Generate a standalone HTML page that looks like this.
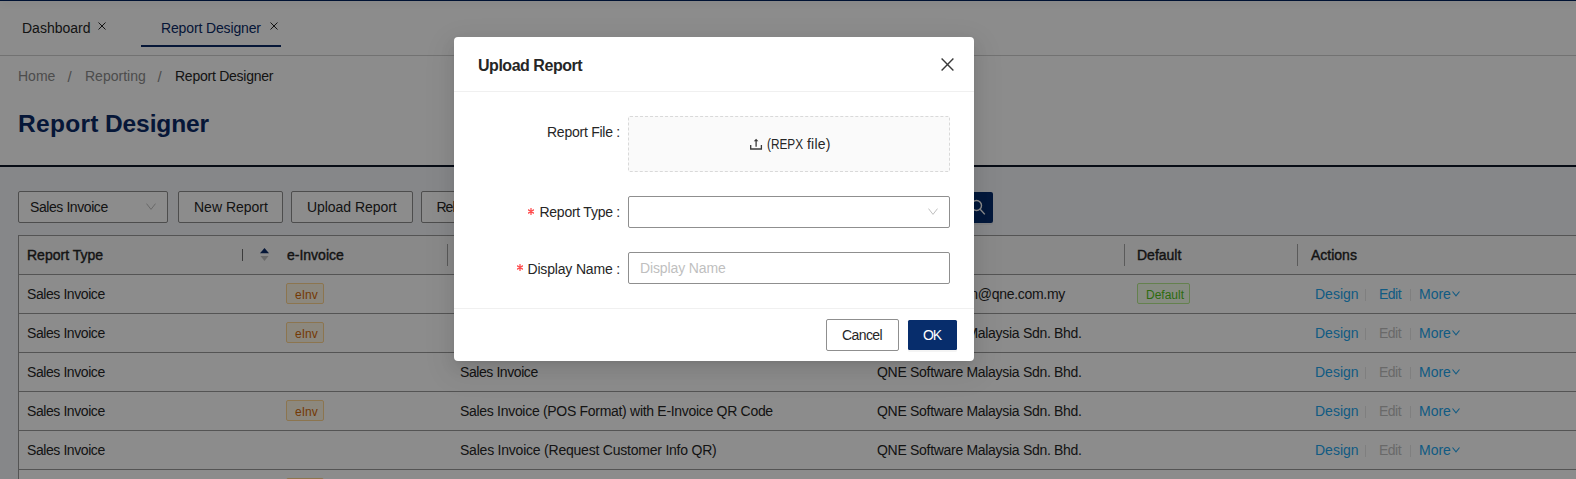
<!DOCTYPE html>
<html><head><meta charset="utf-8">
<style>
*{box-sizing:border-box;margin:0;padding:0}
html,body{width:1576px;height:479px;overflow:hidden;background:#fff;font-family:"Liberation Sans",sans-serif;font-size:14px;line-height:16px;color:#262626}
.a{position:absolute;white-space:nowrap}
#top{position:absolute;left:0;top:0;width:1576px;height:1px;background:#00215d;box-shadow:0 2px 6px rgba(0,0,0,.2)}
#tabline{position:absolute;left:0;top:55px;width:1576px;height:1px;background:#d0d0d0}
#uline{position:absolute;left:141px;top:45px;width:140px;height:2px;background:#0b2a66}
#darkline{position:absolute;left:0;top:165px;width:1576px;height:2px;background:#0e1727}
#content{position:absolute;left:0;top:167px;width:1576px;height:312px;background:#f4f6fa}
.btn{position:absolute;top:191px;height:32px;border:1px solid #8c8c8c;border-radius:2px;background:#fff}
.tbl{position:absolute;left:18px;top:235px;width:1600px;height:260px;border-top:1px solid #999;border-left:1px solid #999;background:#fff}
.hrow{position:absolute;left:0;top:0;width:100%;height:39px;background:#fafafa;border-bottom:1px solid #999}
.row{position:absolute;left:0;width:100%;height:39px;border-bottom:1px solid #999}
.sep{position:absolute;top:8px;width:1px;height:22px;background:#a5a5a5}
.th{position:absolute;top:11px;color:#262626;-webkit-text-stroke:0.4px #262626;letter-spacing:0}
.td{position:absolute;top:11px;color:#262626;letter-spacing:-0.3px}
.tag{position:absolute;top:8px;height:21px;border:1px solid #ffd591;background:#fff7e6;color:#d46b08;border-radius:2px;font-size:12px;line-height:19px;padding:2px 5px 0 8px}
.gtag{position:absolute;top:8px;height:21px;border:1px solid #b7eb8f;background:#f6ffed;color:#52c41a;border-radius:2px;font-size:12px;line-height:19px;padding:2px 5px 0 8px}
.link{color:#22a6ee}
.td.link,.td.dis{top:10.7px}
.dis{color:#bfbfbf}
.vs{position:absolute;top:14px;width:1px;height:12px;background:#e8e8e8}
#mask{position:absolute;left:0;top:0;width:1576px;height:479px;background:rgba(0,0,0,.45)}
#modal{position:absolute;left:454px;top:37px;width:520px;height:324px;background:#fff;border-radius:4px;box-shadow:0 3px 6px -4px rgba(0,0,0,.12),0 6px 16px 0 rgba(0,0,0,.08),0 9px 28px 8px rgba(0,0,0,.05)}
.lbl{position:absolute;color:#262626;text-align:right}
.req{color:#ff4d4f;font-family:"Liberation Mono",monospace;font-size:14px}
.inp{position:absolute;left:174px;width:322px;height:32px;border:1px solid #8f8f8f;border-radius:2px;background:#fff}
</style></head><body>
<div id="top"></div>
<div class="a" id="t_dash" style="left:22px;top:20px">Dashboard</div>
<svg class="a" style="left:98px;top:22px" width="8" height="8" viewBox="0 0 8 8"><path d="M0.5 0.5L7.5 7.5M7.5 0.5L0.5 7.5" stroke="#262626" stroke-width="1"/></svg>
<div class="a" id="t_rd" style="left:161px;top:20px;letter-spacing:-0.14px;color:#0b2a66">Report Designer</div>
<svg class="a" style="left:270px;top:22px" width="8" height="8" viewBox="0 0 8 8"><path d="M0.5 0.5L7.5 7.5M7.5 0.5L0.5 7.5" stroke="#262626" stroke-width="1"/></svg>
<div id="uline"></div>
<div id="tabline"></div>

<div class="a" id="bc1" style="left:18px;top:68px;color:#8c8c8c">Home</div>
<div class="a" style="left:67.5px;top:68.5px;color:#8c8c8c;font-size:15px">/</div>
<div class="a" id="bc2" style="left:85px;top:68px;color:#8c8c8c">Reporting</div>
<div class="a" style="left:157.5px;top:68.5px;color:#8c8c8c;font-size:15px">/</div>
<div class="a" id="bc3" style="left:175px;top:68px;letter-spacing:-0.25px;color:#262626">Report Designer</div>

<div class="a" id="title" style="left:18px;top:110px;font-size:24.5px;line-height:28px;font-weight:700;color:#0b2a66;letter-spacing:0.3px">Report</div><div class="a" id="title2" style="left:105px;top:110px;font-size:24.5px;line-height:28px;font-weight:700;color:#0b2a66;letter-spacing:-0.1px">Designer</div>

<div id="darkline"></div>
<div id="content"></div>

<!-- toolbar -->
<div class="btn" style="left:18px;width:150px"></div>
<div class="a" id="sel" style="left:30px;top:199px;letter-spacing:-0.42px">Sales Invoice</div>
<svg class="a" style="left:146px;top:203px" width="10" height="8" viewBox="0 0 10 8"><path d="M0.5 0.6L5 6.4L9.5 0.6" fill="none" stroke="#bfbfbf" stroke-width="1"/></svg>
<div class="btn" style="left:178px;width:105px"></div>
<div class="a" id="b1" style="left:194px;top:199px">New Report</div>
<div class="btn" style="left:291px;width:122px"></div>
<div class="a" id="b2" style="left:307px;top:199px;letter-spacing:-0.05px">Upload Report</div>
<div class="btn" style="left:421px;width:130px"></div>
<div class="a" style="left:436.5px;top:199px;letter-spacing:-1px">Release</div>
<div class="a" style="left:700px;top:191px;width:262px;height:32px;border:1px solid #8c8c8c;background:#fff"></div><div class="a" style="left:961px;top:192px;width:32px;height:31px;background:#072d6c;border-radius:0 2px 2px 0;box-shadow:0 2px 0 rgba(0,0,0,.045)"></div><svg class="a" style="left:968px;top:197px" width="20" height="20" viewBox="0 0 20 20"><circle cx="8.5" cy="8.5" r="5" fill="none" stroke="#fff" stroke-width="1.4"/><path d="M12.2 12.3L16.8 17.4" stroke="#fff" stroke-width="1.4"/></svg>

<!-- table -->
<div class="tbl">
  <div class="hrow">
    <div class="th" id="h1" style="left:8px">Report Type</div>
    <div class="sep" style="left:223px;top:13px;height:12px;background:#6e6e6e"></div>
    <svg class="a" style="left:241px;top:12px" width="9" height="14" viewBox="0 0 9 14"><path d="M0 5.3L4.5 0L9 5.3Z" fill="#0b2a66"/><path d="M0.5 8L4.5 13L8.5 8Z" fill="#bfbfbf"/></svg>
    <div class="th" id="h2" style="left:268px">e-Invoice</div>
    <div class="sep" style="left:428px"></div>
    <div class="th" style="left:441px">Report Name</div>
    <div class="sep" style="left:849px"></div>
    <div class="th" style="left:858px">Company</div>
    <div class="sep" style="left:1105px"></div>
    <div class="th" id="h5" style="left:1118px">Default</div>
    <div class="sep" style="left:1278px"></div>
    <div class="th" id="h6" style="left:1292px">Actions</div>
  </div>
  <div class="row" style="top:39px">
    <div class="td" style="left:8px;letter-spacing:-0.42px">Sales Invoice</div>
    <div class="tag" style="left:267px">eInv</div>
    <div class="td" style="left:441px;letter-spacing:-0.42px">Sales Invoice</div>
    <div class="td" style="left:874px">support.admin@qne.com.my</div>
    <div class="gtag" style="left:1118px">Default</div>
    <div class="td link" style="left:1296px;letter-spacing:0">Design</div><div class="vs" style="left:1346px"></div>
    <div class="td link" style="left:1360px;letter-spacing:-0.5px">Edit</div><div class="vs" style="left:1391px"></div>
    <div class="td link" style="left:1400px;letter-spacing:0">More</div><svg class="a" style="left:1433px;top:15.7px" width="8" height="6" viewBox="0 0 8 6"><path d="M0.5 0.5L4 4.8L7.5 0.5" fill="none" stroke="#22a6ee" stroke-width="1.1"/></svg>
  </div>
  <div class="row" style="top:78px">
    <div class="td" style="left:8px;letter-spacing:-0.42px">Sales Invoice</div>
    <div class="tag" style="left:267px">eInv</div>
    <div class="td" style="left:441px">Sales Invoice with QR Code</div>
    <div class="td" style="left:858px">QNE Software Malaysia Sdn. Bhd.</div>
    <div class="td link" style="left:1296px;letter-spacing:0">Design</div><div class="vs" style="left:1346px"></div>
    <div class="td dis" style="left:1360px;letter-spacing:-0.5px">Edit</div><div class="vs" style="left:1391px"></div>
    <div class="td link" style="left:1400px;letter-spacing:0">More</div><svg class="a" style="left:1433px;top:15.7px" width="8" height="6" viewBox="0 0 8 6"><path d="M0.5 0.5L4 4.8L7.5 0.5" fill="none" stroke="#22a6ee" stroke-width="1.1"/></svg>
  </div>
  <div class="row" style="top:117px">
    <div class="td" style="left:8px;letter-spacing:-0.42px">Sales Invoice</div>
    <div class="td" style="left:441px;letter-spacing:-0.42px">Sales Invoice</div>
    <div class="td" style="left:858px">QNE Software Malaysia Sdn. Bhd.</div>
    <div class="td link" style="left:1296px;letter-spacing:0">Design</div><div class="vs" style="left:1346px"></div>
    <div class="td dis" style="left:1360px;letter-spacing:-0.5px">Edit</div><div class="vs" style="left:1391px"></div>
    <div class="td link" style="left:1400px;letter-spacing:0">More</div><svg class="a" style="left:1433px;top:15.7px" width="8" height="6" viewBox="0 0 8 6"><path d="M0.5 0.5L4 4.8L7.5 0.5" fill="none" stroke="#22a6ee" stroke-width="1.1"/></svg>
  </div>
  <div class="row" style="top:156px">
    <div class="td" style="left:8px;letter-spacing:-0.42px">Sales Invoice</div>
    <div class="tag" style="left:267px">eInv</div>
    <div class="td" style="left:441px">Sales Invoice (POS Format) with E-Invoice QR Code</div>
    <div class="td" style="left:858px">QNE Software Malaysia Sdn. Bhd.</div>
    <div class="td link" style="left:1296px;letter-spacing:0">Design</div><div class="vs" style="left:1346px"></div>
    <div class="td dis" style="left:1360px;letter-spacing:-0.5px">Edit</div><div class="vs" style="left:1391px"></div>
    <div class="td link" style="left:1400px;letter-spacing:0">More</div><svg class="a" style="left:1433px;top:15.7px" width="8" height="6" viewBox="0 0 8 6"><path d="M0.5 0.5L4 4.8L7.5 0.5" fill="none" stroke="#22a6ee" stroke-width="1.1"/></svg>
  </div>
  <div class="row" style="top:195px">
    <div class="td" style="left:8px;letter-spacing:-0.42px">Sales Invoice</div>
    <div class="td" style="left:441px;letter-spacing:-0.22px">Sales Invoice (Request Customer Info QR)</div>
    <div class="td" style="left:858px">QNE Software Malaysia Sdn. Bhd.</div>
    <div class="td link" style="left:1296px;letter-spacing:0">Design</div><div class="vs" style="left:1346px"></div>
    <div class="td dis" style="left:1360px;letter-spacing:-0.5px">Edit</div><div class="vs" style="left:1391px"></div>
    <div class="td link" style="left:1400px;letter-spacing:0">More</div><svg class="a" style="left:1433px;top:15.7px" width="8" height="6" viewBox="0 0 8 6"><path d="M0.5 0.5L4 4.8L7.5 0.5" fill="none" stroke="#22a6ee" stroke-width="1.1"/></svg>
  </div>
  <div class="row" style="top:234px">
    <div class="tag" style="left:267px">eInv</div>
  </div>
</div>

<div id="mask"></div>
<div id="modal">
  <div class="a" id="mt" style="left:24px;top:18.5px;letter-spacing:-0.47px;font-size:16px;line-height:20px;font-weight:700;color:#262626">Upload Report</div>
  <svg class="a" style="left:486.5px;top:20.5px" width="13" height="13" viewBox="0 0 13 13"><path d="M0.6 0.6L12.4 12.4M12.4 0.6L0.6 12.4" stroke="#3a3a3a" stroke-width="1.4"/></svg>
  <div class="a" style="left:0;top:54px;width:520px;height:1px;background:#f0f0f0"></div>

  <div class="a lbl" id="l1" style="right:354px;top:87px;letter-spacing:-0.25px">Report File :</div>
  <div class="a" style="left:174px;top:79px;width:322px;height:56px;border:1px dashed #d9d9d9;border-radius:2px;background:#fafafa"></div>
  <svg class="a" style="left:296px;top:101px" width="13" height="13" viewBox="0 0 13 13"><path d="M6.1 2.6V8.8" stroke="#3a3a3a" stroke-width="1.3"/><path d="M3.8 3.3L6.1 0.8L8.4 3.3Z" fill="#3a3a3a"/><path d="M0.7 7V11H11.4V7" fill="none" stroke="#3a3a3a" stroke-width="1.3"/></svg>
  <div class="a" id="l_repx" style="left:313px;top:99px;letter-spacing:0;transform:scaleX(0.845);transform-origin:0 0">(REPX</div><div class="a" id="l_repx2" style="left:353px;top:99px;letter-spacing:0.2px">file)</div>

  <svg class="a" style="left:74px;top:170.5px" width="6" height="7" viewBox="0 0 6 7"><path d="M3 0.3V6.7M0.3 1.9L5.7 5.1M5.7 1.9L0.3 5.1" stroke="#ff4d4f" stroke-width="1.25" stroke-linecap="round"/></svg><div class="a lbl" id="l2" style="right:354px;top:167px;letter-spacing:-0.25px">Report Type :</div>
  <div class="inp" style="top:159px"></div>
  <svg class="a" style="left:474px;top:171px" width="10" height="8" viewBox="0 0 10 8"><path d="M0.5 0.6L5 6.4L9.5 0.6" fill="none" stroke="#bfbfbf" stroke-width="1"/></svg>

  <svg class="a" style="left:63px;top:227px" width="6" height="7" viewBox="0 0 6 7"><path d="M3 0.3V6.7M0.3 1.9L5.7 5.1M5.7 1.9L0.3 5.1" stroke="#ff4d4f" stroke-width="1.25" stroke-linecap="round"/></svg><div class="a lbl" id="l3" style="right:354px;top:224px;letter-spacing:-0.17px">Display Name :</div>
  <div class="inp" style="top:215px"></div>
  <div class="a" id="ph" style="left:186px;top:223px;letter-spacing:-0.12px;color:#bfbfbf">Display Name</div>

  <div class="a" style="left:0;top:271px;width:520px;height:1px;background:#f0f0f0"></div>
  <div class="a" style="left:372px;top:282px;width:73px;height:32px;border:1px solid #8f8f8f;border-radius:2px;background:#fff"></div>
  <div class="a" id="cancel" style="left:388px;top:290px;letter-spacing:-0.6px">Cancel</div>
  <div class="a" style="left:454px;top:283px;width:49px;height:30px;background:#072d6c;border-radius:1.5px;box-shadow:0 2px 0 rgba(0,0,0,.045)"></div>
  <div class="a" id="ok" style="left:469px;top:290px;letter-spacing:-1.2px;color:#fff">OK</div>
</div>
</body></html>
